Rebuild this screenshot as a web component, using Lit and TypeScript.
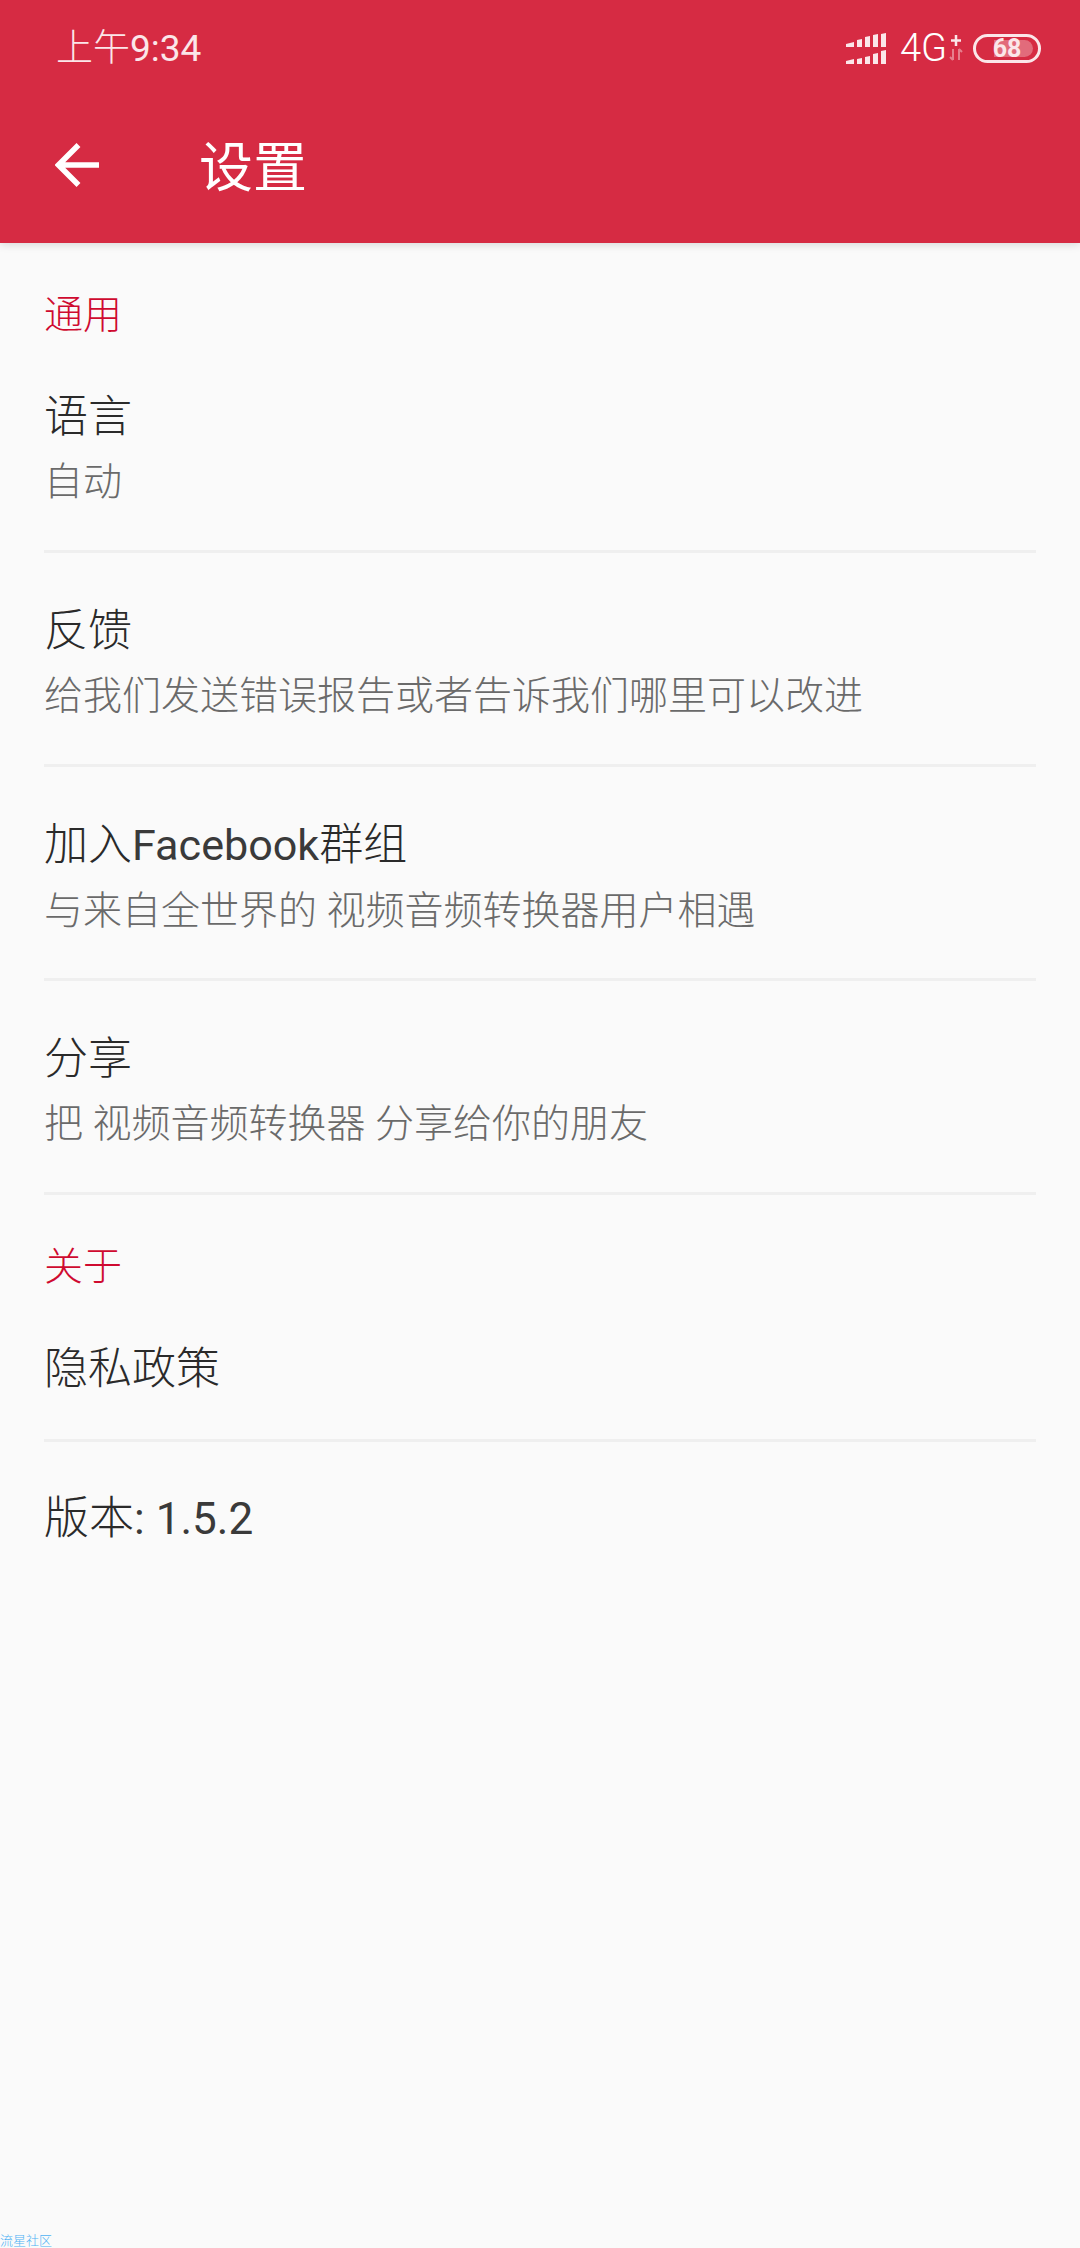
import { LitElement, html, css } from "lit";
import { customElement } from "lit/decorators.js";

const latin = (t: string) => html`<span class="latin">${t}</span>`;

const rows1 = [
  [html`语言`, "自动"],
  [html`反馈`, "给我们发送错误报告或者告诉我们哪里可以改进"],
  [html`加入${latin("Facebook")}群组`, "与来自全世界的 视频音频转换器用户相遇"],
  [html`分享`, "把 视频音频转换器 分享给你的朋友"],
];

@customElement("app-root")
export class AppRoot extends LitElement {
  static styles = css`
    :host {
      display: flex;
      flex-direction: column;
      width: 1080px;
      height: 2248px;
      background: #fafafa;
      font-family: Roboto, "Noto Sans CJK SC", sans-serif;
      font-weight: 300;
      overflow: hidden;
    }
    .latin {
      font-weight: 400;
    }
    .name .latin {
      color: #3a3a3a;
      font-size: 0.98em;
    }
    .appbar {
      height: 243px;
      flex: none;
      background: #d62b43;
      color: #fff;
      box-shadow: 0 2px 8px rgba(0, 0, 0, 0.13);
      display: flex;
      flex-direction: column;
    }
    .status {
      height: 96px;
      display: flex;
      align-items: center;
      justify-content: space-between;
      padding: 0 39px 0 56px;
    }
    .time {
      font-size: 37px;
      line-height: 96px;
      padding-top: 2px;
      color: #fbe6e9;
    }
    .sys {
      display: flex;
      align-items: center;
    }
    .signal {
      width: 40px;
      height: 31px;
      display: block;
    }
    .net {
      font-size: 38px;
      font-weight: 300;
      color: #fff;
      line-height: 40px;
      margin-left: 14px;
      width: 49px;
    }
    .updown {
      width: 14px;
      height: 26px;
      display: block;
    }
    .battery {
      position: relative;
      width: 68px;
      height: 29px;
      margin-left: 10px;
      box-sizing: border-box;
      border: 3px solid #fbe6e9;
      border-radius: 15px;
      display: flex;
      align-items: center;
      justify-content: center;
      font-size: 25px;
      font-weight: 700;
      color: #fbe6e9;
    }
    .fill {
      position: absolute;
      left: 18px;
      right: 5px;
      top: 3px;
      bottom: 3px;
      border-radius: 0 9px 9px 0;
      background: rgba(255, 255, 255, 0.3);
    }
    .battery span {
      position: relative;
      line-height: 23px;
    }
    .toolbar {
      height: 138px;
      display: flex;
      align-items: center;
      padding-left: 55px;
    }
    .back {
      width: 44px;
      height: 44px;
      flex: none;
    }
    .title {
      font-size: 54px;
      font-weight: 400;
      margin-left: 100px;
      line-height: 60px;
      padding-top: 8px;
    }
    .section {
      font-size: 39px;
      font-weight: 300;
      line-height: 48px;
      color: #cf0a30;
      padding: 48px 44px 0;
    }
    .row {
      margin: 0 44px;
      height: 214px;
      box-sizing: border-box;
      border-bottom: 3px solid #efefef;
      padding-top: 48px;
    }
    .name {
      font-size: 44px;
      line-height: 60px;
      color: #2a2a2a;
    }
    .sub {
      font-size: 39px;
      line-height: 52px;
      margin-top: 9px;
      color: #6a6a6a;
    }
    .single {
      height: 151px;
    }
    .plain {
      border: none;
      padding-top: 47px;
      height: auto;
    }
    .plain .name {
      font-size: 45px;
    }
    .spacer {
      flex: 1;
    }
    .mark {
      font-size: 13px;
      line-height: 14px;
      color: #4fb2f4;
    }
  `;

  render() {
    return html`
      <div class="appbar">
        <div class="status">
          <span class="time">上午${latin("9:34")}</span>
          <div class="sys">
            <svg class="signal" viewBox="0 0 40 31" fill="#fbe6e9">
              <path d="M0 11l8-2v5H0zM11 7l5-1v8h-5zM19 4l5-1v11h-5zM27 2l5-1v13h-5zM35 1l5-1v14h-5z" />
              <path d="M0 28l8-2v5H0zM11 26l5-1v6h-5zM19 24l5-1v8h-5zM27 21l5-1v11h-5zM35 18l5-1v14h-5z" />
            </svg>
            <span class="net">4G</span>
            <svg class="updown" viewBox="0 0 14 26">
              <path d="M7 0v11M2 5.5h10" stroke="#fbe6e9" stroke-width="2.5" fill="none" />
              <path d="M4 14v11M1 22l3 3M10 14v11M10 14l3 3" stroke="#fbe6e9" stroke-width="2" opacity=".45" fill="none" />
            </svg>
            <div class="battery"><div class="fill"></div><span>68</span></div>
          </div>
        </div>
        <div class="toolbar">
          <svg class="back" viewBox="0 0 44 44" fill="none" stroke="#fff" stroke-width="5.5">
            <path d="M44 22H4M23.5 2L3.5 22l20 20" />
          </svg>
          <span class="title">设置</span>
        </div>
      </div>
      <div class="section">通用</div>
      ${rows1.map(
        ([n, s]) => html`<div class="row">
          <div class="name">${n}</div>
          <div class="sub">${s}</div>
        </div>`
      )}
      <div class="section">关于</div>
      <div class="row single"><div class="name">隐私政策</div></div>
      <div class="row plain"><div class="name">版本${latin(": 1.5.2")}</div></div>
      <div class="spacer"></div>
      <div class="mark">流星社区</div>
    `;
  }
}
